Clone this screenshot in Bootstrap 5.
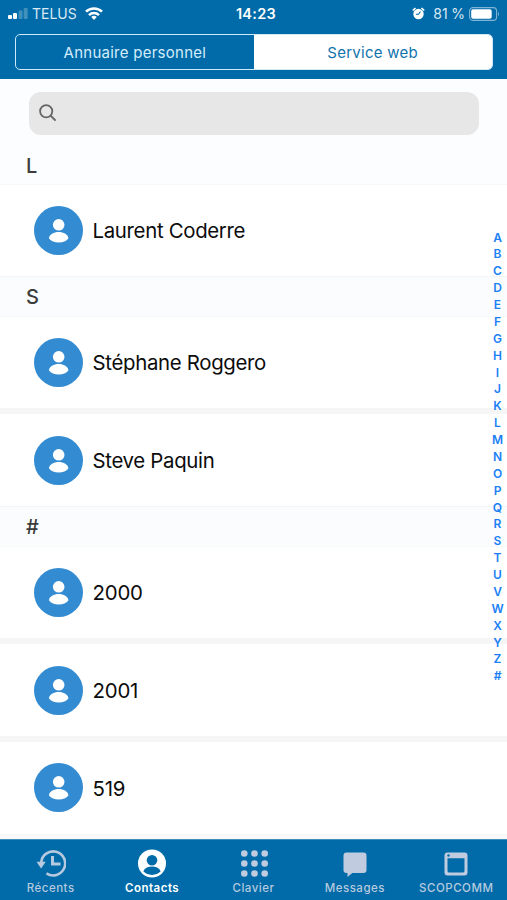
<!DOCTYPE html>
<html lang="fr">
<head>
<meta charset="utf-8">
<meta name="viewport" content="width=device-width, initial-scale=1">
<title>Contacts</title>
<link href="https://cdn.jsdelivr.net/npm/bootstrap@5.3.0/dist/css/bootstrap.min.css" rel="stylesheet">
<style>
  :root { --brand: #006ba8; --muted-tab: #b6c9df; }
  body { font-family: Inter, "Liberation Sans", sans-serif; color: #111; }
  .phone { width: 507px; height: 900px; background: #fff; }
  .top-area { height: 79px; background: var(--brand); color: #fff; }
  .status-bar { height: 27px; padding: 0 7px 0 8px; font-size: 14px; line-height: 27px; }
  .status-bar > div { flex: 1 1 0; }
  .clock { font-weight: 600; font-size: 14.5px; letter-spacing: .3px; padding-left: 4px; }
  .carrier { letter-spacing: 0; color: #d9e9f5; }
  .segments { margin: 7px 14.5px 0 15px; height: 36px; border: 1.5px solid #cfe8f8; border-radius: 5px; }
  .segments .btn { border: 0; border-radius: 0; padding: 0; font-size: 15px; letter-spacing: .26px; line-height: 33px; color: #d5edfb; }
  .segments .btn.active { background: #fff; color: #1173ad; }
  .search-area { height: 68px; padding: 13px 28px 0 29px; background: #fcfdff; }
  .search-box { height: 43px; border-radius: 12px; background: #e7e7e7; padding: 0 0 2px 10px; }
  .section-head { height: 40.6px; padding: 1px 26px 0; background: #fafcfd; border-top: 1px solid #f3f5f6; border-bottom: 1px solid #f8f9f9; font-size: 20px; font-weight: 500; color: #3c3c3c; }
  .section-head.first { height: 38px; padding-top: 0; border-top: 0; background: #fcfdff; }
  .contact { height: 91.4px; padding-left: 33.5px; background: #fff; font-size: 20.4px; letter-spacing: -.32px; color: #0c0c0c; }
  .contact span { padding-top: 2px; }
  .contact .digits { letter-spacing: -.2px; }
  .contact svg { margin-right: 10px; }
  .contact + .contact { height: 97.8px; border-top: 6.4px solid #f6f6f7; }
  .last-gap { height: 5px; background: #f8f8f9; }
  .alpha-index { top: 229.5px; right: 0; width: 19px; font-size: 12px; font-weight: 600; line-height: 16.87px; color: #1b80f5; }
  .tab-bar { height: 61px; background: var(--brand); border-top: 1px solid #3d8dbd; color: var(--muted-tab); }
  .tab-item { width: 101.4px; padding-top: 8px; font-size: 11.5px; line-height: 14px; font-weight: 500; letter-spacing: .5px; }
  .tab-item svg { margin-bottom: 2px; }
  .tab-item.active { color: #fff; font-weight: 600; }
</style>
<script src="https://cdn.jsdelivr.net/npm/bootstrap@5.3.0/dist/js/bootstrap.bundle.min.js"></script>
</head>
<body class="m-0">
<svg class="d-none">
  <symbol id="person" viewBox="0 0 49 49">
    <circle cx="24.5" cy="24.5" r="24.5" fill="#338bd1"/>
    <circle cx="24.7" cy="18.8" r="5.8" fill="#fff"/>
    <path d="M15 32.500c0-4 5-6.500 9.700-6.500s9.700 2.500 9.700 6.500c-2 2.700-5.500 4.100-9.700 4.100s-7.700-1.400-9.700-4.100z" fill="#fff"/>
  </symbol>
</svg>
<div class="phone d-flex flex-column position-relative overflow-hidden">
  <header class="top-area flex-shrink-0">
    <div class="status-bar d-flex align-items-center">
      <div class="d-flex align-items-center carrier">
        <svg width="20" height="13" viewBox="0 0 20 13" fill="#fff"><rect x="0" y="8" width="4" height="4" rx="1"/><rect x="5" y="6" width="4" height="6" rx="1"/><rect x="10.500" y="3.500" width="4" height="8.500" rx="1" opacity=".25"/><rect x="15.700" y="1" width="4" height="11" rx="1" opacity=".25"/></svg>
        <span class="ms-1">TELUS</span>
        <svg class="ms-2" width="18" height="13" viewBox="0 0 18 13" fill="none" stroke="#fff" stroke-width="2.500"><path d="M1 4.700a11.500 11.500 0 0 1 16 0M4 8.100a7.200 7.200 0 0 1 10 0"/><path d="M9 12.900L6.200 10.100a4 4 0 0 1 5.600 0z" fill="#fff" stroke="none"/></svg>
      </div>
      <div class="text-center clock">14:23</div>
      <div class="d-flex align-items-center justify-content-end carrier">
        <svg width="13" height="13" viewBox="0 0 13 13"><circle cx="6.500" cy="7" r="5.200" fill="#fff"/><path d="M.8 3.500L3.500 1M12.200 3.500L9.500 1" stroke="#fff" stroke-width="1.700"/><path d="M8.500 4.500L6.500 7.300H4" fill="none" stroke="#006ba8" stroke-width="1.100"/></svg>
        <span class="mx-1 ps-1">81&#8198;&#8202;%</span>
        <svg width="31" height="14" viewBox="0 0 31 14"><rect x=".6" y=".6" width="27" height="12.800" rx="3.500" fill="none" stroke="#7fb5d6" stroke-width="1.100"/><rect x="2.200" y="2.200" width="20.500" height="9.600" rx="1.800" fill="#fff"/><path d="M29 4.700q2 2.300 0 4.600z" fill="#7fb5d6"/></svg>
      </div>
    </div>
    <div class="segments d-flex overflow-hidden">
      <button class="btn w-50">Annuaire personnel</button>
      <button class="btn w-50 active">Service web</button>
    </div>
  </header>

  <main class="flex-grow-1 overflow-hidden">
    <div class="search-area">
      <div class="search-box d-flex align-items-center">
        <svg width="18" height="18" viewBox="0 0 18 18" fill="none" stroke="#666" stroke-width="1.800"><circle cx="7.200" cy="7.200" r="6.100"/><path d="M11.600 11.600l5 5" stroke-width="2"/></svg>
      </div>
    </div>
    <div class="section-head first d-flex align-items-center">L</div>
    <div class="contact d-flex align-items-center"><svg width="49" height="49"><use href="#person"/></svg><span>Laurent Coderre</span></div>
    <div class="section-head d-flex align-items-center">S</div>
    <div class="contact d-flex align-items-center"><svg width="49" height="49"><use href="#person"/></svg><span>Stéphane Roggero</span></div>
    <div class="contact d-flex align-items-center"><svg width="49" height="49"><use href="#person"/></svg><span>Steve Paquin</span></div>
    <div class="section-head d-flex align-items-center">#</div>
    <div class="contact d-flex align-items-center"><svg width="49" height="49"><use href="#person"/></svg><span class="digits">2000</span></div>
    <div class="contact d-flex align-items-center"><svg width="49" height="49"><use href="#person"/></svg><span class="digits">2001</span></div>
    <div class="contact d-flex align-items-center"><svg width="49" height="49"><use href="#person"/></svg><span class="digits">519</span></div>
    <div class="last-gap"></div>
  </main>

  <nav class="alpha-index position-absolute d-flex flex-column text-center">
    <span>A</span><span>B</span><span>C</span><span>D</span><span>E</span><span>F</span><span>G</span><span>H</span><span>I</span><span>J</span><span>K</span><span>L</span><span>M</span><span>N</span><span>O</span><span>P</span><span>Q</span><span>R</span><span>S</span><span>T</span><span>U</span><span>V</span><span>W</span><span>X</span><span>Y</span><span>Z</span><span>#</span>
  </nav>

  <footer class="tab-bar d-flex flex-shrink-0">
    <div class="tab-item d-flex flex-column align-items-center">
      <svg width="30" height="31" viewBox="0 0 30 31" fill="none" stroke="currentColor" stroke-width="2.600"><path d="M5.200 14.500A12 12 0 1 1 10.500 25.400"/><path d="M16.500 8v8h8" stroke-width="3"/><path d="M.5 13.800h9.200l-4.600 6.600z" fill="currentColor" stroke="none"/></svg>
      <span>Récents</span>
    </div>
    <div class="tab-item active d-flex flex-column align-items-center">
      <svg width="30" height="31" viewBox="0 0 30 31"><circle cx="15" cy="15.500" r="14" fill="#fff"/><circle cx="15" cy="12.200" r="5.300" fill="#006ba8"/><path d="M6.300 23.300c1.500-3.300 5-4.700 8.700-4.700s7.200 1.400 8.700 4.700c-2.200 2.300-5.200 3.600-8.700 3.600s-6.500-1.300-8.700-3.600z" fill="#006ba8"/></svg>
      <span>Contacts</span>
    </div>
    <div class="tab-item d-flex flex-column align-items-center">
      <svg class="ms-1" width="30" height="31" viewBox="0 0 30 31" fill="#c0cbe0"><circle cx="4.300" cy="5.500" r="3.300"/><circle cx="4.300" cy="15.500" r="3.300"/><circle cx="4.300" cy="25.500" r="3.300"/><circle cx="14.500" cy="5.500" r="3.300"/><circle cx="14.500" cy="15.500" r="3.300"/><circle cx="14.500" cy="25.500" r="3.300"/><circle cx="24.700" cy="5.500" r="3.300"/><circle cx="24.700" cy="15.500" r="3.300"/><circle cx="24.700" cy="25.500" r="3.300"/></svg>
      <span>Clavier</span>
    </div>
    <div class="tab-item d-flex flex-column align-items-center">
      <svg width="30" height="31" viewBox="0 0 30 31" fill="#c0cbe0"><path d="M6.500 4.500h17a3 3 0 0 1 3 3v14.500a3 3 0 0 1-3 3H12.300L7.500 29v-4H6.500a3 3 0 0 1-3-3V7.500a3 3 0 0 1 3-3z"/></svg>
      <span>Messages</span>
    </div>
    <div class="tab-item d-flex flex-column align-items-center">
      <svg width="30" height="31" viewBox="0 0 30 31"><path fill="#c0cbe0" fill-rule="evenodd" d="M6.500 4.500h17a3 3 0 0 1 3 3v17a3 3 0 0 1-3 3h-17a3 3 0 0 1-3-3v-17a3 3 0 0 1 3-3zM6.500 10.200v12.800a1.500 1.500 0 0 0 1.500 1.500h14a1.500 1.500 0 0 0 1.500-1.500V10.200z"/><circle cx="7.500" cy="7.500" r="1.200" fill="#006ba8"/></svg>
      <span>SCOPCOMM</span>
    </div>
  </footer>
</div>
</body>
</html>
